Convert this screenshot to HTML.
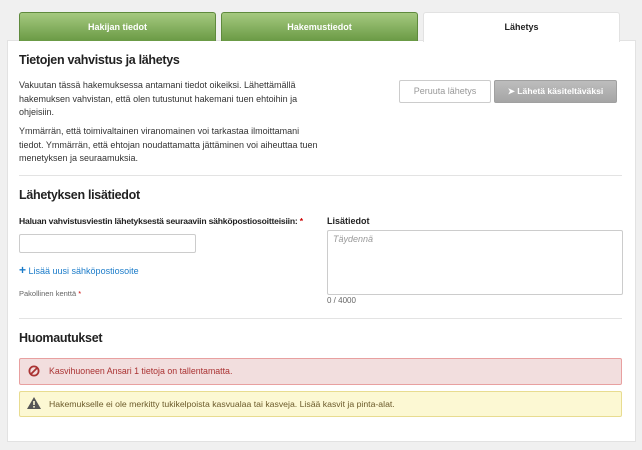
<!DOCTYPE html>
<html><head><meta charset="utf-8"><style>
*{box-sizing:border-box;margin:0;padding:0}
body{width:642px;height:450px;background:#f0f0f0;font-family:"Liberation Sans",sans-serif;color:#333;position:relative;overflow:hidden;font-size:9px}
.a{position:absolute}
.tab{position:absolute;top:12px;height:29px;width:197px;text-align:center;line-height:28px;font-weight:bold;font-size:9px;color:#fff;background:linear-gradient(#a5c97f,#6a9a45);border:1px solid #5f8a3d;border-bottom:none;border-radius:3px 3px 0 0}
.panel{position:absolute;left:7px;top:40px;width:629px;height:402px;background:#fff;border:1px solid #e2e2e2}
h2{position:absolute;font-size:12.5px;font-weight:bold;color:#222;letter-spacing:-0.3px}
p{position:absolute;line-height:13.5px}
.hr{position:absolute;left:19px;width:603px;height:1px;background:#e3e3e3}
.btn{position:absolute;top:80px;height:23px;border-radius:2px;text-align:center;line-height:21px;font-size:9px}
.alert{position:absolute;left:19px;width:603px;border-radius:2px;padding-left:29px;font-size:8.8px}
</style></head><body>
<div class="panel"></div>
<div class="tab" style="left:19px">Hakijan tiedot</div>
<div class="tab" style="left:221px">Hakemustiedot</div>
<div class="tab" style="left:423px;background:#fff;color:#222;border-color:#e2e2e2;height:30px">Lähetys</div>
<h2 style="left:19px;top:53px">Tietojen vahvistus ja lähetys</h2>
<p style="left:19px;top:79px;width:300px">Vakuutan tässä hakemuksessa antamani tiedot oikeiksi. Lähettämällä hakemuksen vahvistan, että olen tutustunut hakemani tuen ehtoihin ja ohjeisiin.</p>
<p style="left:19px;top:125px;width:300px">Ymmärrän, että toimivaltainen viranomainen voi tarkastaa ilmoittamani tiedot. Ymmärrän, että ehtojan noudattamatta jättäminen voi aiheuttaa tuen menetyksen ja seuraamuksia.</p>
<div class="btn" style="left:399px;width:92px;border:1px solid #ccc;color:#999;background:#fff">Peruuta lähetys</div>
<div class="btn" style="left:494px;width:123px;background:linear-gradient(#bdbdbd,#a5a5a5);border:1px solid #a0a0a0;color:#fff;font-weight:bold;font-size:8.6px">&#10148; Lähetä käsiteltäväksi</div>
<div class="hr" style="top:175px"></div>
<h2 style="left:19px;top:188px">Lähetyksen lisätiedot</h2>
<div class="a" style="left:19px;top:216px;font-weight:bold;font-size:8.6px;letter-spacing:-0.2px;color:#222">Haluan vahvistusviestin lähetyksestä seuraaviin sähköpostiosoitteisiin: <span style="color:#c00">*</span></div>
<div class="a" style="left:19px;top:234px;width:177px;height:19px;border:1px solid #ccc;border-radius:2px"></div>
<div class="a" style="left:19px;top:263px;color:#1a7bc9;font-size:9px"><b style="font-size:12px">+</b> Lisää uusi sähköpostiosoite</div>
<div class="a" style="left:19px;top:289px;color:#666;font-size:7.5px">Pakollinen kenttä <span style="color:#c00">*</span></div>
<div class="a" style="left:327px;top:216px;font-weight:bold;font-size:9px;color:#222">Lisätiedot</div>
<div class="a" style="left:327px;top:230px;width:296px;height:65px;border:1px solid #ccc;border-radius:2px;padding:3px 5px;color:#999;font-style:italic">Täydennä</div>
<div class="a" style="left:327px;top:296px;color:#666;font-size:8px">0 / 4000</div>
<div class="hr" style="top:318px"></div>
<h2 style="left:19px;top:331px">Huomautukset</h2>
<div class="alert" style="top:358px;height:27px;line-height:25px;background:#f2dede;border:1px solid #e8a0a0;color:#a33">Kasvihuoneen Ansari 1 tietoja on tallentamatta.</div>
<svg class="a" style="left:28px;top:365px" width="12" height="12" viewBox="0 0 12 12"><circle cx="6" cy="6" r="4.6" fill="none" stroke="#a33" stroke-width="1.8"/><line x1="3" y1="9" x2="9" y2="3" stroke="#a33" stroke-width="1.8"/></svg>
<div class="alert" style="top:391px;height:26px;line-height:24px;background:#fcf8d3;border:1px solid #e8dc90;color:#6b5a2a;font-size:8.7px">Hakemukselle ei ole merkitty tukikelpoista kasvualaa tai kasveja. Lisää kasvit ja pinta-alat.</div>
<svg class="a" style="left:27px;top:397px" width="14" height="12" viewBox="0 0 14 12"><path d="M7 0L14 12H0Z" fill="#555"/><rect x="6.2" y="4" width="1.6" height="4" fill="#fcf8d3"/><rect x="6.2" y="9" width="1.6" height="1.6" fill="#fcf8d3"/></svg>
</body></html>
